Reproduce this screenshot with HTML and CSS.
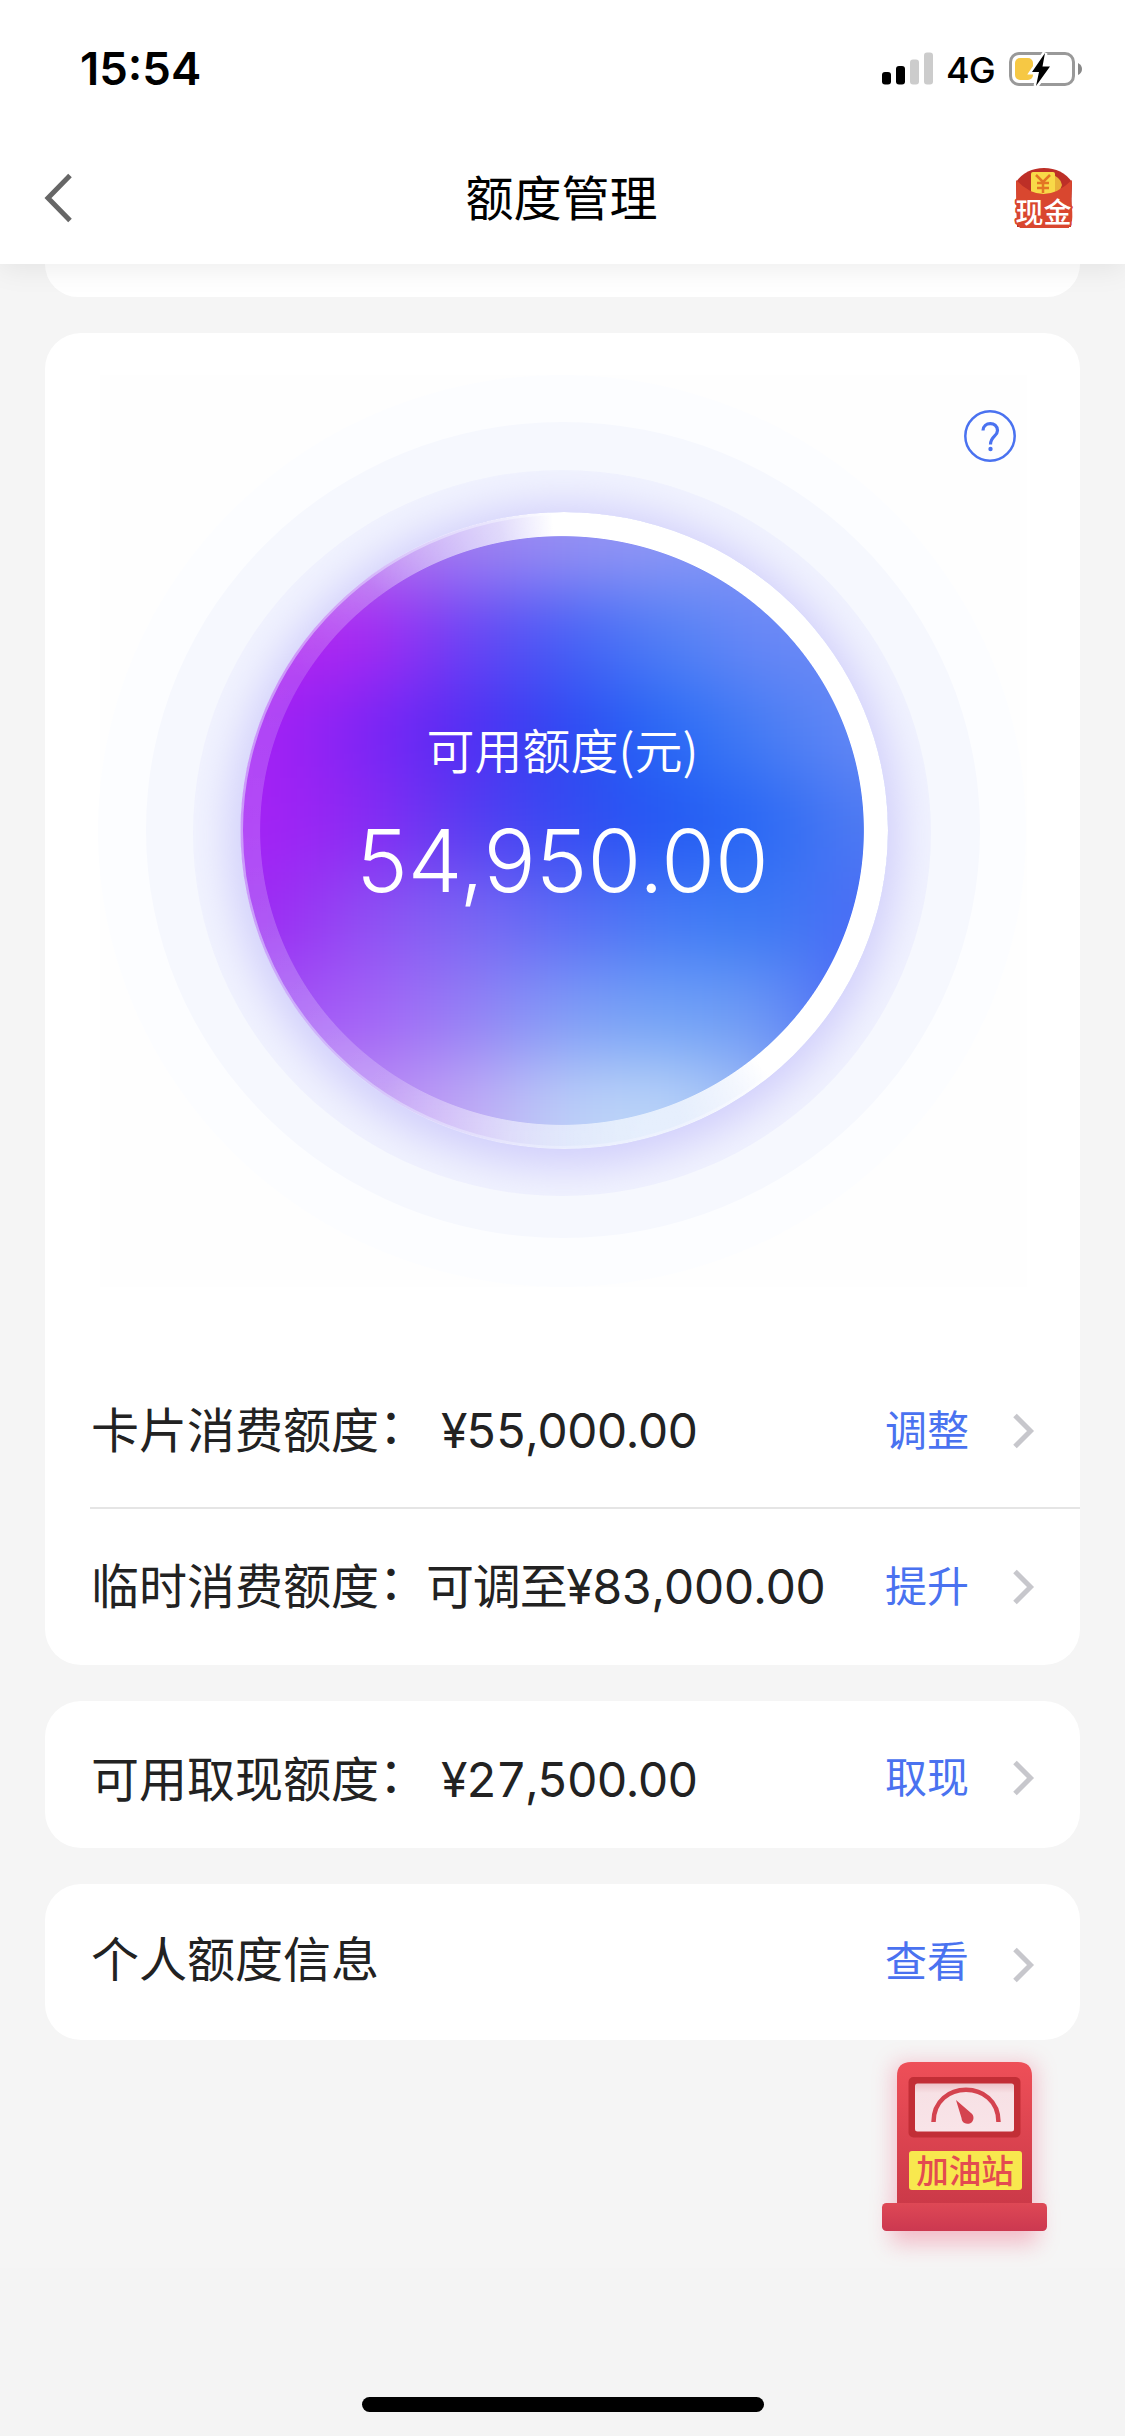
FILE: index.html
```html
<!DOCTYPE html>
<html lang="zh-CN">
<head>
<meta charset="utf-8">
<title>额度管理</title>
<link rel="stylesheet" href="styles.css">
</head>
<body>
<div class="page">
  <header class="top">
    <div class="status">
      <span class="time">15:54</span>
      <div class="status-right">
        <svg class="signal" width="52" height="34" viewBox="0 0 52 34">
          <rect x="0" y="20" width="9" height="12.500" rx="3"/>
          <rect x="14" y="14" width="9" height="18.500" rx="3"/>
          <rect class="off" x="28" y="7.500" width="9" height="25" rx="3"/>
          <rect class="off" x="42" y="0.500" width="9" height="32" rx="3"/>
        </svg>
        <span class="net">4G</span>
        <svg class="battery" width="74" height="38" viewBox="0 0 74 38">
          <rect x="1.500" y="3.500" width="63" height="31" rx="8.500" fill="none" stroke="#999" stroke-width="3"/>
          <path d="M69 13 Q73 15 73 19 Q73 23 69 25 Z" fill="#888"/>
          <rect x="6" y="8" width="18" height="22" rx="5" fill="#f6c844"/>
          <path d="M36 3 L23 22 L30 22 L27 36 L41 16.500 L33.500 16.500 Z" fill="#000" stroke="#fff" stroke-width="5" paint-order="stroke"/>
        </svg>
      </div>
    </div>
    <div class="nav">
      <svg class="back" width="30" height="50" viewBox="0 0 30 50"><path d="M26 2.500 L4 25 L26 47.500" fill="none" stroke="#666" stroke-width="5"/></svg>
      <h1 class="title">额度管理</h1>
      <svg class="cash" width="60" height="62" viewBox="0 0 60 62">
        <path d="M2 15 Q12 1 30 1 Q48 1 58 15 L57 60 H3 Z" fill="#bd2f27"/>
        <path d="M36 7 Q47 10 48 18 L44 28 L36 28 Z" fill="#e9b239"/>
        <rect x="17" y="5" width="24" height="24" rx="2" fill="#f8d948"/>
        <path d="M2 13 Q29 41 58 13 L57 32 Q59 47 58 54 L55 57 L55 61 H6 L3 57 Z" fill="#d9472f"/>
        <path d="M22 8 L29 15 L36 8 M29 15 V26 M23 16 H35 M23 21 H35" fill="none" stroke="#e37524" stroke-width="2.500"/>
        <text class="cash-text" x="29.500" y="55.500" text-anchor="middle">现金</text>
      </svg>
    </div>
  </header>

  <main class="content">
    <div class="card card-prev"></div>
    <section class="card">
      <div class="gauge">
        <svg class="dial" width="1035" height="1021" viewBox="45 333 1035 1021">
          <defs>
            <clipPath id="disc"><ellipse cx="564" cy="830.500" rx="323.500" ry="318"/></clipPath>
            <clipPath id="halo"><ellipse cx="562" cy="833" rx="369" ry="363"/></clipPath>
            <filter id="soft" filterUnits="userSpaceOnUse" x="0" y="250" width="1130" height="1170" color-interpolation-filters="sRGB"><feGaussianBlur stdDeviation="34"/></filter>
            <filter id="glow" x="-30%" y="-30%" width="160%" height="160%"><feGaussianBlur stdDeviation="22"/></filter>
            <linearGradient id="g0"><stop offset="0.333" stop-color="#b468f0"/><stop offset="0.416" stop-color="#9f7ff2"/><stop offset="0.500" stop-color="#9590f3"/><stop offset="0.583" stop-color="#8f98f6"/><stop offset="0.667" stop-color="#7f92f6"/></linearGradient>
            <linearGradient id="g1"><stop offset="0.250" stop-color="#b024f0"/><stop offset="0.333" stop-color="#a928f2"/><stop offset="0.416" stop-color="#6a42f4"/><stop offset="0.500" stop-color="#4560f5"/><stop offset="0.583" stop-color="#5080f5"/><stop offset="0.667" stop-color="#6a88f6"/></linearGradient>
            <linearGradient id="g2"><stop offset="0.250" stop-color="#a420f4"/><stop offset="0.333" stop-color="#7c24f4"/><stop offset="0.416" stop-color="#522cf3"/><stop offset="0.500" stop-color="#2c48f2"/><stop offset="0.583" stop-color="#266af5"/><stop offset="0.667" stop-color="#477df4"/><stop offset="0.750" stop-color="#6588f5"/></linearGradient>
            <linearGradient id="g3"><stop offset="0.250" stop-color="#a422f4"/><stop offset="0.333" stop-color="#882af3"/><stop offset="0.416" stop-color="#583cf2"/><stop offset="0.500" stop-color="#354af2"/><stop offset="0.583" stop-color="#2358f3"/><stop offset="0.667" stop-color="#2868f4"/><stop offset="0.750" stop-color="#507bf2"/></linearGradient>
            <linearGradient id="g4"><stop offset="0.250" stop-color="#9c2af3"/><stop offset="0.333" stop-color="#9050f3"/><stop offset="0.416" stop-color="#7c66f3"/><stop offset="0.500" stop-color="#5b6cf5"/><stop offset="0.583" stop-color="#457af5"/><stop offset="0.667" stop-color="#3a7af4"/><stop offset="0.750" stop-color="#4c6cf5"/></linearGradient>
            <linearGradient id="g5"><stop offset="0.250" stop-color="#a04df5"/><stop offset="0.333" stop-color="#a462f6"/><stop offset="0.416" stop-color="#947ff5"/><stop offset="0.500" stop-color="#7f9cf6"/><stop offset="0.583" stop-color="#70a2f6"/><stop offset="0.667" stop-color="#6c98f5"/><stop offset="0.750" stop-color="#4a66f5"/></linearGradient>
            <linearGradient id="g6"><stop offset="0.333" stop-color="#b888f4"/><stop offset="0.416" stop-color="#c0a8f5"/><stop offset="0.500" stop-color="#bcd0f8"/><stop offset="0.583" stop-color="#bcd6f8"/><stop offset="0.667" stop-color="#9bb8f6"/><stop offset="0.750" stop-color="#5577f5"/></linearGradient>
          </defs>
          <rect x="100" y="375" width="927" height="912" fill="#fefefe"/>
          <ellipse cx="562" cy="831" rx="464" ry="456" fill="#fcfdff"/>
          <ellipse cx="563" cy="830" rx="417" ry="408" fill="#f6f8fe"/>
          <ellipse cx="562" cy="833" rx="369" ry="363" fill="#f1f3fe"/>
          <g clip-path="url(#halo)"><ellipse cx="564" cy="836" rx="335" ry="331" fill="#d0cefb" filter="url(#glow)"/></g>
          <g clip-path="url(#disc)">
            <g filter="url(#soft)">
              <rect x="-25" y="300" width="1180" height="290" fill="url(#g0)"/>
              <rect x="-25" y="590" width="1180" height="94" fill="url(#g1)"/>
              <rect x="-25" y="684" width="1180" height="94" fill="url(#g2)"/>
              <rect x="-25" y="778" width="1180" height="94" fill="url(#g3)"/>
              <rect x="-25" y="872" width="1180" height="94" fill="url(#g4)"/>
              <rect x="-25" y="966" width="1180" height="94" fill="url(#g5)"/>
              <rect x="-25" y="1060" width="1180" height="300" fill="url(#g6)"/>
            </g>
          </g>
          <ellipse cx="564" cy="830.500" rx="322.500" ry="317" fill="none" stroke="#e0e3ff" stroke-width="3" opacity="0.500"/>
        </svg>
        <div class="ring"></div>
        <div class="gauge-text">
          <div class="gauge-label">可用额度(元)</div>
          <div class="gauge-amount">54,950.00</div>
        </div>
        <svg class="help" width="54" height="54" viewBox="0 0 54 54" fill="none" stroke="#4a72f0">
          <circle cx="27" cy="27" r="24.700" stroke-width="2.500"/>
          <path d="M20 21.500 C20 12.500 34.500 12 34.500 21.500 C34.500 27.500 27.500 27 27.500 35.500" stroke-width="3.200"/>
          <circle cx="27.500" cy="40" r="2.200" fill="#4a72f0" stroke="none"/>
        </svg>
      </div>
      <div class="row row-line">
        <span class="label">卡片消费额度<span class="colon">：</span></span><span class="value">¥55,000.00</span>
        <a class="link">调整</a>
        <svg class="chev" width="23" height="36" viewBox="0 0 23 36"><path d="M3 2.500 L18.500 18 L3 33.500"/></svg>
      </div>
      <div class="row row-temp">
        <span class="label">临时消费额度<span class="colon">：</span></span><span class="value value-near">可调至¥83,000.00</span>
        <a class="link">提升</a>
        <svg class="chev" width="23" height="36" viewBox="0 0 23 36"><path d="M3 2.500 L18.500 18 L3 33.500"/></svg>
      </div>
    </section>
    <section class="card">
      <div class="row row-cash">
        <span class="label">可用取现额度<span class="colon">：</span></span><span class="value">¥27,500.00</span>
        <a class="link">取现</a>
        <svg class="chev" width="23" height="36" viewBox="0 0 23 36"><path d="M3 2.500 L18.500 18 L3 33.500"/></svg>
      </div>
    </section>
    <section class="card">
      <div class="row row-info">
        <span class="label">个人额度信息</span>
        <a class="link">查看</a>
        <svg class="chev" width="23" height="36" viewBox="0 0 23 36"><path d="M3 2.500 L18.500 18 L3 33.500"/></svg>
      </div>
    </section>
  </main>

  <footer class="bottom"><div class="home"></div></footer>

  <svg class="pump" width="245" height="240" viewBox="845 2030 245 240">
    <defs>
      <linearGradient id="body" x1="0" y1="0" x2="0" y2="1"><stop offset="0" stop-color="#ee4f58"/><stop offset="1" stop-color="#cb3948"/></linearGradient>
      <linearGradient id="base" x1="0" y1="0" x2="0" y2="1"><stop offset="0" stop-color="#de4855"/><stop offset="1" stop-color="#cc3850"/></linearGradient>
      <linearGradient id="glass" x1="0" y1="0" x2="0" y2="1"><stop offset="0" stop-color="#edc3c8"/><stop offset="0.200" stop-color="#f7e1e5"/><stop offset="1" stop-color="#f9e4e8"/></linearGradient>
      <filter id="shade" x="-30%" y="-30%" width="160%" height="160%"><feGaussianBlur stdDeviation="11"/></filter>
    </defs>
    <path d="M894 2064 H1035 V2204 H1038 V2244 H891 V2204 H894 Z" fill="#ee5577" opacity="0.350" filter="url(#shade)"/>
    <path d="M897 2206 V2076 Q897 2062 911 2062 H1018 Q1032 2062 1032 2076 V2206 Z" fill="url(#body)"/>
    <rect x="908.500" y="2077" width="112" height="60.500" rx="5" fill="#c22e36"/>
    <rect x="915" y="2083.500" width="99" height="48" rx="2.500" fill="url(#glass)"/>
    <path d="M933.500 2122 C933.500 2079 998.500 2079 998.500 2122" fill="none" stroke="#d4434f" stroke-width="4.500"/>
    <path d="M956 2100 L971 2113 A6 6 0 1 1 961.500 2118 Z" fill="#d4434f"/>
    <rect x="909" y="2151" width="113" height="39" rx="3" fill="#f8e84e"/>
    <text class="pump-text" x="965" y="2183" text-anchor="middle">加油站</text>
    <rect x="882" y="2203" width="165" height="28" rx="4.500" fill="url(#base)"/>
  </svg>
</div>
</body>
</html>
```
FILE: styles.css
```css
* { box-sizing: border-box; }
body {
  margin: 0;
  font-family: Inter, "Noto Sans CJK SC", sans-serif;
  color: #222;
  background: #f5f5f5;
}
.page {
  position: relative;
  width: 1125px;
  height: 2436px;
  display: flex;
  flex-direction: column;
  overflow: hidden;
}
.top {
  height: 264px;
  flex: none;
  background: #fff;
  z-index: 1;
  box-shadow: 0 4px 28px rgba(0, 0, 0, 0.08);
}
.status {
  height: 138px;
  padding: 0 42px 0 80px;
  display: flex;
  align-items: center;
  justify-content: space-between;
}
.time {
  font-size: 45.5px;
  font-weight: 600;
  line-height: 50px;
  color: #000;
}
.status-right { display: flex; align-items: center; }
.signal { fill: #000; }
.off { fill: #ccc; }
.net {
  width: 48px;
  margin: 2px 15px 0 12px;
  font-size: 36px;
  font-weight: 500;
  line-height: 40px;
  letter-spacing: -1px;
  color: #000;
}
.nav {
  height: 120px;
  padding: 0 51px 0 44px;
  display: flex;
  align-items: center;
  justify-content: space-between;
}
.title {
  margin: 2px 0 0 35px;
  font-size: 48px;
  font-weight: 400;
  line-height: 60px;
  color: #000;
}
.cash { overflow: visible; }
.cash-text {
  font: 500 28px "Noto Sans CJK SC", sans-serif;
  fill: #fff;
  stroke: #d9472f;
  stroke-width: 4px;
  stroke-linejoin: round;
  paint-order: stroke;
}
.content {
  height: 2004px;
  flex: none;
  padding: 0 45px;
  display: flex;
  flex-direction: column;
  gap: 36px;
}
.card { background: #fff; border-radius: 36px; }
.card-prev { height: 33px; border-radius: 0 0 36px 36px; }
.gauge {
  position: relative;
  height: 1021px;
  display: grid;
}
.dial, .ring, .gauge-text { grid-area: 1 / 1; }
.ring {
  width: 648px;
  height: 637px;
  margin: 179px 0 0 195px;
  border-radius: 50%;
  background: conic-gradient(#fff 0deg, #fff 140deg, rgba(255, 255, 255, 0.68) 158deg, rgba(255, 255, 255, 0.5) 190deg, rgba(255, 255, 255, 0.22) 215deg, rgba(255, 255, 255, 0.16) 300deg, rgba(255, 255, 255, 0.26) 322deg, rgba(255, 255, 255, 0.7) 348deg, #fff 358deg);
  -webkit-mask: radial-gradient(ellipse 302px 294.5px at 322px 318.5px, transparent 99.8%, #000 100.1%);
  mask: radial-gradient(ellipse 302px 294.5px at 322px 318.5px, transparent 99.8%, #000 100.1%);
}
.gauge-text {
  z-index: 1;
  padding-top: 383px;
  color: #fff;
  text-align: center;
}
.gauge-label {
  font-size: 48px;
  font-weight: 350;
  line-height: 64px;
  font-family: "Noto Sans CJK SC", sans-serif;
}
.gauge-amount {
  margin-top: 31px;
  font-size: 87px;
  font-weight: 350;
  line-height: 100px;
}
.help { position: absolute; left: 918px; top: 76px; }
.row {
  height: 155px;
  padding: 0 45px 0 1px;
  margin-left: 45px;
  display: flex;
  align-items: center;
}
.row-line { border-bottom: 2px solid #e5e5e5; }
.row-temp { height: 156px; }
.row-cash { height: 147px; padding-top: 10px; }
.row-info { height: 156px; }
.label { width: 335px; font-size: 48px; line-height: 60px; white-space: nowrap; }
.colon { line-height: 1; vertical-align: 5px; }
.value {
  margin-left: 15px;
  font-size: 48px;
  line-height: 60px;
  letter-spacing: -1.4px;
  white-space: nowrap;
  font-variant-numeric: tabular-nums;
}
.value-near { margin-left: 0; letter-spacing: -1.15px; }
.link {
  margin-left: auto;
  font-size: 42px;
  line-height: 50px;
  color: #4a72f0;
}
.chev { margin-left: 43px; }
.chev path { fill: none; stroke: #c7c7cc; stroke-width: 5px; }
.row-cash .link, .row-cash .chev { margin-bottom: 4px; }
.row-info .label { margin-bottom: 4px; }
.row-info .chev { margin-top: 6px; }
.bottom {
  height: 168px;
  background: #f4f4f4;
  display: flex;
  justify-content: center;
  align-items: flex-end;
  padding-bottom: 24px;
}
.home { width: 402px; height: 15px; border-radius: 8px; background: #000; }
.pump { position: absolute; left: 845px; top: 2030px; }
.pump-text { font: 500 32.5px "Noto Sans CJK SC", sans-serif; fill: #e34b50; }
```
